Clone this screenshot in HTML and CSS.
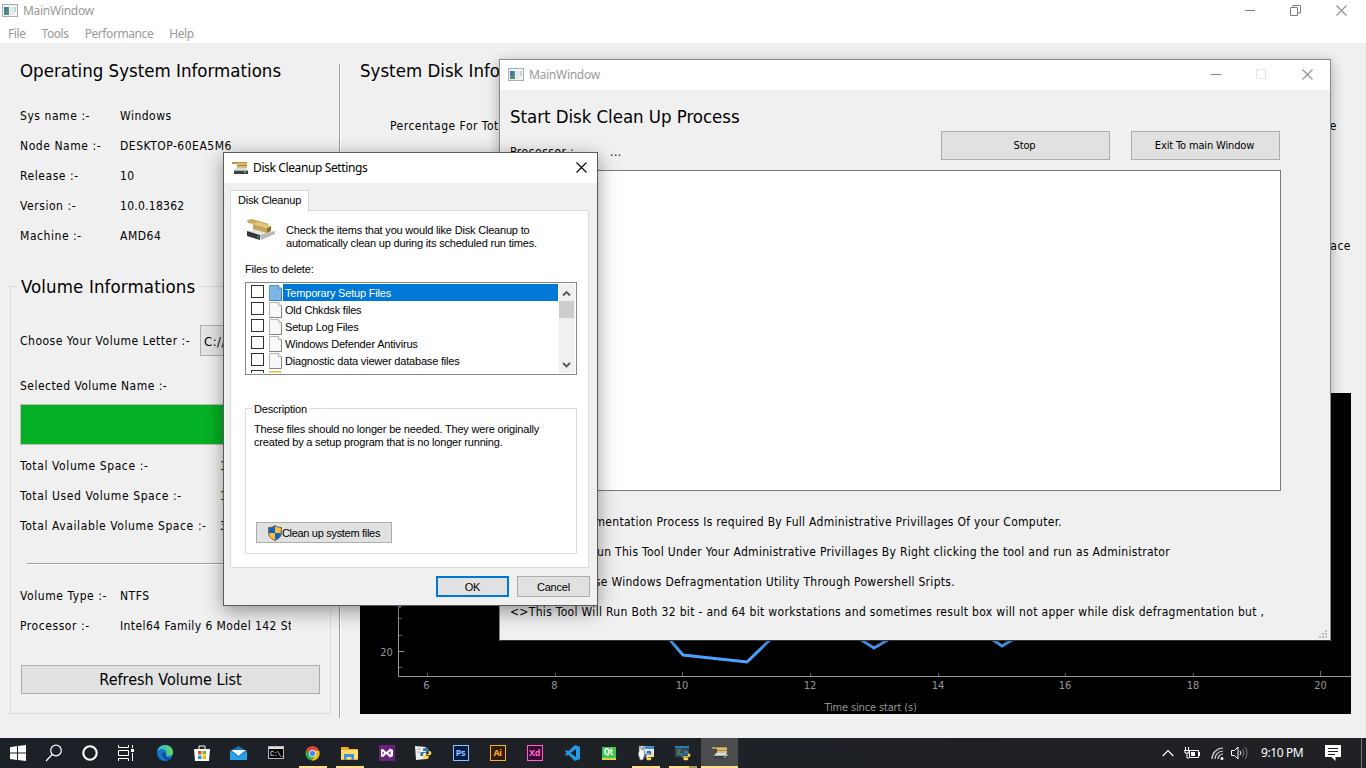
FILE: index.html
```html
<!DOCTYPE html>
<html lang="en">
<head>
<meta charset="utf-8">
<title>MainWindow</title>
<link rel="stylesheet" href="styles.css">
</head>
<body>
<svg class="defs" width="0" height="0">
  <defs>
    <symbol id="app" viewBox="0 0 16 14"><rect x=".5" y=".5" width="15" height="12" fill="#f4f4f4" stroke="#a9adb1"/><rect x="2" y="3" width="5" height="8" fill="#4c9080"/><rect x="2" y="3" width="3" height="4" fill="#3f76a8"/><rect x="8" y="3" width="3.500" height="8" fill="#e2e8e6"/><rect x="12" y="3" width="2" height="5" fill="#c4d6ce"/></symbol>
    <symbol id="disk" viewBox="0 0 16 14"><path d="M0 1h15v2H0z" fill="#b99645"/><path d="M5 2h10v5H5z" fill="#d6bb79"/><path d="M5 4h10v1H5z" fill="#a98a45"/><path d="M4 7h10l2 3H2z" fill="#d9dbdd"/><path d="M2 9h14v4H2z" fill="#3c4043"/><path d="M2 9h14v1H2z" fill="#aeb1b4"/><path d="M12 10.500h2v1.500h-2z" fill="#36e33c"/></symbol>
    <symbol id="x" viewBox="0 0 11 11"><path d="M.5.5l10 10M10.500.5l-10 10" fill="none" stroke="currentColor" stroke-width="1.1"/></symbol>
    <symbol id="page" viewBox="0 0 13 16"><path d="M.5.500h9l3 3v12H.5z" fill="#f8f8f8" stroke="#b4b4b4"/><path d="M.5 15.500h12v-12" fill="none" stroke="#858585"/><path d="M9.500.5v3h3" fill="#fff" stroke="#b4b4b4"/></symbol>
    <symbol id="page-selected" viewBox="0 0 13 16"><path d="M.5.500h9l3 3v12H.5z" fill="#7cb5e6" stroke="#5a97c9"/><path d="M.5 15.500h12v-12" fill="none" stroke="#3f7fb4"/><path d="M9.500.5v3h3" fill="#8fc2ec" stroke="#5a97c9"/></symbol>
    <symbol id="py" viewBox="0 0 16 16"><path d="M8 1C5 1 5 2 5 4v1h4v1H3C1 6 1 11 3 11h2V9c0-1 1-2 2-2h3c1 0 2-1 2-2V3c0-2-2-2-4-2z" fill="#3973a8"/><path d="M8 15c3 0 4-1 4-2v-2H8v-1h5c3 0 3-5 0-5h-1v2c0 1-1 2-2 2H7c-1 0-2 1-2 2v2c0 1 1 2 3 2z" fill="#ffd94f"/></symbol>
  </defs>
</svg>
<div class="desktop">
  <main class="main-window">
    <header class="titlebar inactive">
      <svg class="app-icon"><use href="#app"/></svg><span class="segoe">MainWindow</span>
      <div class="controls">
        <svg width="11" height="11"><path d="M1 5.500h10" stroke="#808080"/></svg>
        <svg width="11" height="11"><path d="M.5 2.500h7v8h-7zM3 2.500V.5h7.500V8H8" fill="none" stroke="#808080"/></svg>
        <svg width="11" height="11"><use href="#x"/></svg>
      </div>
    </header>
    <nav class="menubar segoe"><span>File</span><span>Tools</span><span>Performance</span><span>Help</span></nav>
    <div class="main-body">
      <section class="left">
        <h1>Operating System Informations</h1>
        <dl class="facts">
          <div><dt>Sys name :-</dt><dd>Windows</dd></div>
          <div><dt>Node Name :-</dt><dd>DESKTOP-60EA5M6</dd></div>
          <div><dt>Release :-</dt><dd>10</dd></div>
          <div><dt>Version :-</dt><dd class="build">10.0.18362</dd></div>
          <div><dt>Machine :-</dt><dd>AMD64</dd></div>
        </dl>
        <section class="volume">
          <h1 class="legend">Volume Informations</h1>
          <div class="choose"><span>Choose Your Volume Letter :-</span><span class="combo">C://</span></div>
          <div class="selected">Selected Volume Name :-</div>
          <div class="progress"></div>
          <dl class="facts wide">
            <div><dt>Total Volume Space :-</dt><dd>1</dd></div>
            <div><dt>Total Used Volume Space :-</dt><dd>1</dd></div>
            <div><dt>Total Available Volume Space :-</dt><dd>3</dd></div>
          </dl>
          <div class="rule"></div>
          <dl class="facts">
            <div><dt>Volume Type :-</dt><dd>NTFS</dd></div>
            <div><dt>Processor :-</dt><dd class="clip">Intel64 Family 6 Model 142 St</dd></div>
          </dl>
          <div class="button refresh">Refresh Volume List</div>
        </section>
      </section>
      <div class="divider"></div>
      <section class="right">
        <h1>System Disk Info</h1>
        <div class="usage"><span>Percentage For Tot</span><span>e</span></div>
        <div class="space">ace</div>
        <svg class="plot" width="991" height="321" viewBox="360 393 991 321">
          <rect x="360" y="393" width="991" height="321" fill="#000"/>
          <path d="M398.500 393v283.500H1351" fill="none" stroke="#969696"/>
          <path d="M399 651.500h5" stroke="#969696"/>
          <path d="M399 618.500h3M399 635.500h3M399 667.500h3M427.500 673v3M555.500 673v3M682.500 672v4M810.500 673v3M938.500 673v3M1065.500 673v3M1193.500 673v3M1320.500 671v5" stroke="#626262"/>
          <path d="M399 607l5-6M664 633l19 22 64 7 28-27M852 634l22 14 24-14M984 634l18 12 20-12" fill="none" stroke="#4da3ff" stroke-width="3"/>
          <g class="ticks"><text x="386.500" y="656">20</text><text x="426.500" y="689">6</text><text x="554.500" y="689">8</text><text x="682" y="689">10</text><text x="810" y="689">12</text><text x="938" y="689">14</text><text x="1065" y="689">16</text><text x="1193" y="689">18</text><text x="1320.500" y="689">20</text></g>
          <text class="axis" x="870.500" y="711">Time since start (s)</text>
        </svg>
      </section>
    </div>
  </main>

  <section class="clean-window">
    <header class="titlebar inactive">
      <svg class="app-icon"><use href="#app"/></svg><span class="segoe">MainWindow</span>
      <div class="controls">
        <svg width="11" height="11"><path d="M1 5.500h10" stroke="#808080"/></svg>
        <svg width="11" height="11"><path d="M.5.500h9v9h-9z" fill="none" stroke="#e4e4e4"/></svg>
        <svg width="11" height="11"><use href="#x"/></svg>
      </div>
    </header>
    <div class="clean-body">
      <div class="clean-head">
        <div class="clean-title"><h1>Start Disk Clean Up Process</h1><div class="cpu"><span>Processor :-</span><span>...</span></div></div>
        <div class="button stop">Stop</div>
        <div class="button exit">Exit To main Window</div>
      </div>
      <div class="output"></div>
      <ul class="notes">
        <li class="n1">mentation Process Is required By Full Administrative Privillages Of your Computer.</li>
        <li class="n2">un This Tool Under Your Administrative Privillages By Right clicking the tool and run as Administrator</li>
        <li class="n3">se Windows Defragmentation Utility Through Powershell Sripts.</li>
        <li class="n4">&lt;&gt;This Tool Will Run Both 32 bit - and 64 bit workstations and sometimes result box will not apper while disk defragmentation but ,</li>
      </ul>
      <svg class="grip" width="9" height="9"><path d="M6 0h2v2H6zM3 3h2v2H3zM6 3h2v2H6zM0 6h2v2H0zM3 6h2v2H3zM6 6h2v2H6z" fill="#bdbdbd"/></svg>
    </div>
  </section>

  <section class="dialog">
    <header class="dialog-title segoe"><svg width="16" height="14"><use href="#disk"/></svg><span>Disk Cleanup Settings</span><svg class="close" width="11" height="11"><use href="#x"/></svg></header>
    <div class="dialog-body">
      <div class="tab">Disk Cleanup</div>
      <div class="pane">
        <div class="intro">
          <svg width="30" height="22" viewBox="0 0 30 22"><path d="M1 13l9-4 19 4-15 6z" fill="#e4e5e7"/><path d="M14 16l15-4v3l-14 6z" fill="#b8babd"/><path d="M1 12l13 4v5L1 17z" fill="#34373a"/><path d="M11 17l2 1v1l-2-1z" fill="#42da46"/><path d="M1 1l5-1 17 5-4 3L8 5 2 4z" fill="#c9aa5c"/><path d="M7 5l14 4v5L7 10z" fill="#c6a251"/><path d="M21 9l4-2v5l-4 2z" fill="#8e702c"/><path d="M7 5l5-2 13 4-4 2z" fill="#e0c784"/></svg>
          <p>Check the items that you would like Disk Cleanup to<br>automatically clean up during its scheduled run times.</p>
        </div>
        <div class="files-label">Files to delete:</div>
        <div class="list">
          <ul>
            <li class="sel"><i></i><svg><use href="#page-selected"/></svg><span>Temporary Setup Files</span></li>
            <li><i></i><svg><use href="#page"/></svg><span>Old Chkdsk files</span></li>
            <li><i></i><svg><use href="#page"/></svg><span>Setup Log Files</span></li>
            <li><i></i><svg><use href="#page"/></svg><span>Windows Defender Antivirus</span></li>
            <li><i></i><svg><use href="#page"/></svg><span>Diagnostic data viewer database files</span></li>
            <li><i></i><b></b></li>
          </ul>
          <div class="scroll"><svg width="15" height="17"><path d="M4 11.500L7.500 8l3.500 3.500" fill="none" stroke="#555" stroke-width="1.800"/></svg><div class="thumb"></div><svg width="15" height="17"><path d="M4 7l3.500 3.500L11 7" fill="none" stroke="#555" stroke-width="1.800"/></svg></div>
        </div>
        <section class="description">
          <h2>Description</h2>
          <p>These files should no longer be needed. They were originally<br>created by a setup program that is no longer running.</p>
          <div class="button system"><svg width="14" height="16" viewBox="0 0 14 16"><path d="M7 .5C5 2 3 2.500.7 2.500V8c0 4 3 6 6.300 7.500C10.300 14 13.300 12 13.300 8V2.500C11 2.500 9 2 7 .5z" fill="#ffbd35"/><path d="M7 1C5 2.300 3 3 1 3v5h6zM7 8h6c0 4-3 6-6 7z" fill="#0b67c4"/><path d="M7 .5C5 2 3 2.500.7 2.500V8c0 4 3 6 6.300 7.500C10.300 14 13.300 12 13.300 8V2.500C11 2.500 9 2 7 .5z" fill="none" stroke="#55595c"/></svg><span>Clean up system files</span></div>
        </section>
      </div>
      <div class="actions"><div class="button ok">OK</div><div class="button">Cancel</div></div>
    </div>
  </section>

  <footer class="taskbar">
    <div class="shell">
      <div><svg width="16" height="16"><path d="M0 2.300L7 1v6.500H0zM8 1l8-1v7.500H8zM0 8.500h7V15L0 14zM8 8.500h8V16l-8-1z" fill="#fff"/></svg></div>
      <div><svg width="18" height="18"><circle cx="11" cy="6.500" r="5.300" fill="none" stroke="#fff" stroke-width="1.200"/><path d="M7.200 10.500L1 17" stroke="#fff" stroke-width="1.200"/></svg></div>
      <div><svg width="16" height="16"><circle cx="8" cy="8" r="6.700" fill="none" stroke="#fff" stroke-width="2.100"/></svg></div>
      <div><svg width="16" height="16"><path d="M.5 0v2.500h10V0M.5 5.500h10v5H.5zM.5 16v-2.500h10V16M14.500 0v3M14.500 8v8" fill="none" stroke="#fff"/><path d="M13 4h3v3h-3z" fill="#fff"/></svg></div>
    </div>
    <div class="pinned">
      <div><svg width="16" height="16"><defs><linearGradient id="edge" x1="0" x2="1"><stop stop-color="#26aee5"/><stop offset="1" stop-color="#62da61"/></linearGradient></defs><circle cx="8" cy="8" r="8" fill="#1476c9"/><path d="M0 7C1 2 4 0 8 0c5 0 8 3.500 8 7 0 3-2 4-5 4-2 0-2-1-1.500-2C10 7 8 4 5 4 3 4 1 5 0 7z" fill="url(#edge)"/><path d="M6 7c-2 4 1 8 6 8 1 0 2-1 3-2-5 1-7-1-6-4z" fill="#0d4d94"/></svg></div>
      <div><svg width="16" height="16"><path d="M5 5V1h6v4" fill="none" stroke="#fff"/><path d="M0 4h16l-1 12H1z" fill="#fff"/><path d="M4 6h3.500v3.500H4z" fill="#e84d23"/><path d="M8.500 6H12v3.500H8.500z" fill="#7db700"/><path d="M4 10.500h3.500V14H4z" fill="#149ed9"/><path d="M8.500 10.500H12V14H8.500z" fill="#f8b400"/></svg></div>
      <div><svg width="17" height="16"><path d="M0 6l8.500-5L17 6v9H0z" fill="#1673b5"/><path d="M1 5h15l-7.500 6z" fill="#f1f7fb"/><path d="M0 6l8.500 6L17 6v9H0z" fill="#27a5eb"/></svg></div>
      <div><svg width="16" height="14"><rect x=".5" y=".5" width="15" height="12" fill="#000" stroke="#b8b8b8"/><path d="M1 2h14" stroke="#ddd" stroke-width="2"/><text class="cmd" x="2" y="10">C:\_</text></svg></div>
      <div class="open"><svg width="15" height="15" viewBox="0 0 16 16"><circle cx="8" cy="8" r="7.500" fill="#34a853"/><path d="M1.500 4A7.500 7.500 0 0 1 15 5H8L5 9z" fill="#ea4335"/><path d="M8 5h7c2 5-2 11-8 10.500L11 10z" fill="#fbbc05"/><circle cx="8" cy="8" r="3.700" fill="#fff"/><circle cx="8" cy="8" r="2.900" fill="#4285f4"/></svg></div>
      <div class="open"><svg width="17" height="15"><path d="M0 1h7l1.500 2H17v11H0z" fill="#f2ae22"/><path d="M0 4h17v9H0z" fill="#ffdc72"/><path d="M3 14V8h10v6h-2.500v-3h-5v3z" fill="#3b91dc"/></svg></div>
      <div><svg width="16" height="16"><path d="M0 0h16v16H0z" fill="#68217a"/><path d="M2 4.500L4 4l3.500 3L11 3.500 14 5v6l-3 1.500L7.500 9 4 12l-2-.5z" fill="#fff"/><path d="M3.500 6.500v3L5.300 8zM11.500 6v4L9.300 8z" fill="#68217a"/></svg></div>
      <div><svg width="17" height="16"><path d="M0 1l11 1v12L1 15z" fill="#eee"/><path d="M2 4h4M2 7h3" stroke="#aaa"/><use href="#py" x="4" y="2" width="13" height="13"/></svg></div>
      <div><span class="adobe ps">Ps</span></div>
      <div><span class="adobe ai">Ai</span></div>
      <div><span class="adobe xd">Xd</span></div>
      <div><svg width="16" height="16"><path d="M11 0l5 2v12l-5 2L1 6.500 2.500 5 12 12V4L2.500 11 1 9.500z" fill="#249be2"/></svg></div>
      <div><span class="qt">Qt</span></div>
      <div class="open"><svg width="16" height="16"><path d="M2 1h14v11H2z" fill="#e8eef3"/><path d="M7 1h9v3H7z" fill="#3f91d7"/><path d="M1 0l3 5 2-5v6l1 3-2 6H2L0 9l1-3z" fill="#f5f5f5" stroke="#4e5357" stroke-width=".7"/><use href="#py" x="5" y="5" width="11" height="11"/></svg></div>
      <div class="open multi"><svg width="16" height="16"><path d="M0 1h14v11H0z" fill="#394651"/><path d="M0 1h14v2H0z" fill="#297cb8"/><path d="M2 5h4M2 7h3M2 9h5" stroke="#55a669"/><use href="#py" x="5" y="5" width="11" height="11"/></svg></div>
      <div class="active"><svg width="16" height="14"><use href="#disk"/></svg></div>
    </div>
    <div class="tray">
      <svg width="12" height="8"><path d="M.7 7L6 1.500 11.300 7" fill="none" stroke="#fff" stroke-width="1.200"/></svg>
      <svg width="16" height="13"><path d="M5.500 3.500h9v7h-9z" fill="none" stroke="#fff"/><path d="M7 5h4v4H7zM15 5h1v4h-1z" fill="#fff"/><path d="M1.500 0v3M4.500 0v3M0 3.500h6M1 4v2h4V4M3 6v5h2" fill="none" stroke="#fff"/></svg>
      <svg width="13" height="13"><path d="M1 12A11 11 0 0 1 12 1M4 12a8 8 0 0 1 8-8M7 12a5 5 0 0 1 5-5" fill="none" stroke="#d4d4d4" stroke-width="1.200"/><circle cx="11" cy="11.500" r="1.500" fill="#fff"/></svg>
      <svg width="17" height="14"><path d="M.5 4.500h3L7 1v12L3.500 9.500h-3z" fill="none" stroke="#fff"/><path d="M9 5q2 2 0 4" fill="none" stroke="#fff"/><path d="M11.500 3q3 4 0 8M14 1q4 6 0 12" fill="none" stroke="#777"/></svg>
      <span class="clock segoe">9:10 PM</span>
      <svg width="16" height="16"><path d="M0 0h16v12h-5.500v4l-4-4H0z" fill="#fff"/><path d="M3 3.500h10M3 6.500h10M3 9.500h7" stroke="#202124"/></svg>
      <span class="peek"></span>
    </div>
  </footer>
</div>
</body>
</html>
```
FILE: styles.css
```css
* { box-sizing: border-box; }
body, h1, h2, p, dl, dd, ul { margin: 0; padding: 0; }
ul { list-style: none; }
svg { display: block; flex: none; }
.defs { position: absolute; }
.desktop { position: relative; width: 1366px; height: 768px; overflow: hidden; background: #f0f0f0; color: #000; font: 12px/32px "DejaVu Sans Condensed", "DejaVu Sans", sans-serif; font-stretch: condensed; letter-spacing: .5px; white-space: nowrap; }
.segoe { font-family: "Noto Sans", "Open Sans", sans-serif; font-stretch: normal; font-size: 12px; letter-spacing: -.28px; }
h1 { height: 30px; font-size: 18.500px; font-weight: 400; line-height: 32px; letter-spacing: .01px; }
.button { display: flex; align-items: center; justify-content: center; background: #e1e1e1; border: 1px solid #adadad; }

.main-window { height: 738px; display: flex; flex-direction: column; }
.titlebar { display: flex; align-items: center; background: #fff; flex: none; }
.inactive { color: #999; }
.main-window .titlebar { height: 23px; padding: 0 19px 2px 2px; }
.titlebar .segoe { padding-top: 1px; }
.app-icon { width: 16px; height: 14px; margin-right: 5px; }
.controls { margin-left: auto; display: flex; gap: 35px; color: #909090; }
.menubar { height: 20px; background: #fff; color: #999; display: flex; gap: 16px; padding-left: 8px; line-height: 21px; letter-spacing: -.42px; flex: none; }
.main-body { flex: 1; display: flex; min-height: 0; }
.left { width: 339px; padding: 12px 8px 0 10px; }
.left > h1 { margin: 0 0 15px 10px; }
.left > .facts { padding-left: 10px; }
.facts > div { display: flex; height: 30px; }
.facts dt { width: 100px; flex: none; letter-spacing: .56px; }
.wide dt { width: 200px; letter-spacing: .6px; }
.build { letter-spacing: .26px; }
.volume { width: 321px; height: 428px; margin-top: 36px; border: 1px solid #dcdcdc; padding: 0 10px 0 9px; }
.legend { width: max-content; margin: -16px 0 0 -3px; padding: 0 3px 0 4px; background: #f0f0f0; letter-spacing: .12px; }
.choose { display: flex; height: 31px; margin-top: 24px; }
.choose > span:first-child { width: 180px; }
.combo { flex: 1; border: 1px solid #adadad; background: #e5e5e5; padding-left: 3px; font-size: 13px; }
.selected { margin-top: 14px; height: 30px; letter-spacing: .46px; }
.progress { margin-top: 4px; height: 41px; width: 300px; border: 1px solid #bcbcbc; background: #06b025; }
.wide { margin-top: 5px; }
.rule { margin: 23px 0 15px 7px; height: 2px; background: #a0a0a0; border-bottom: 1px solid #fff; }
.clip { width: 171px; overflow: hidden; letter-spacing: .42px; }
.refresh { width: 299px; height: 29px; margin: 25px 0 0 1px; font-size: 16px; letter-spacing: .02px; }
.divider { width: 2px; height: 654px; margin-top: 21px; background: #a0a0a0; border-right: 1px solid #fff; }
.right { width: 1010px; padding: 12px 0 0 19px; }
.usage { margin-top: 25px; height: 30px; display: flex; justify-content: space-between; padding: 0 14px 0 30px; }
.space { height: 30px; margin-top: 90px; text-align: right; }
.plot { margin-top: 133px; }
.ticks, .axis { fill: #969696; text-anchor: middle; font-size: 11px; letter-spacing: 0; }
.axis { letter-spacing: -.15px; }

.clean-window { position: absolute; left: 499px; top: 59px; width: 832px; height: 582px; border: 1px solid #8a8a8a; border-bottom-color: #333; background: #f0f0f0; box-shadow: 0 3px 12px rgba(0,0,0,.32); }
.clean-window .titlebar { height: 30px; padding: 0 17px 1px 8px; }
.clean-body { height: 550px; padding: 11px 49px 0 10px; display: flex; flex-direction: column; }
.clean-head { display: flex; height: 69px; padding-right: 1px; }
.clean-title { flex: 1; }
.clean-title h1 { letter-spacing: -.04px; }
.cpu { display: flex; margin-top: 5px; }
.cpu span:first-child { width: 100px; }
.stop, .exit { height: 29px; margin-top: 30px; padding-right: 2px; font-size: 11px; letter-spacing: -.15px; }
.stop { width: 169px; margin-right: 21px; }
.exit { width: 149px; }
.output { height: 321px; border: 1px solid #7a7a7a; background: #fff; flex: none; }
.notes { margin-top: 15px; letter-spacing: .3px; }
.notes li { height: 30px; display: flex; justify-content: flex-end; }
.n1 { width: 552px; } .n2 { width: 660px; } .n3 { width: 445px; } .notes .n4 { justify-content: flex-start; letter-spacing: .32px; }
.grip { margin: 4px -43px 0 auto; position: relative; left: 4px; }

.dialog { position: absolute; left: 223px; top: 152px; width: 375px; height: 454px; border: 1px solid #5a5a5a; background: #f0f0f0; box-shadow: 0 5px 18px rgba(0,0,0,.4); font: 11px/13px "Liberation Sans", Arial, sans-serif; letter-spacing: -.19px; }
.dialog-title { height: 30px; background: #fff; display: flex; align-items: center; gap: 5px; padding: 0 10px 0 8px; line-height: 30px; letter-spacing: -.38px; }
.close { margin: 0 0 1px auto; }
.dialog-body { padding: 7px 7px 0 6px; }
.tab { position: relative; z-index: 1; width: 79px; height: 21px; border: 1px solid #d9d9d9; border-bottom: 0; background: #fff; text-align: center; line-height: 19px; }
.pane { width: 359px; height: 358px; margin-top: -1px; background: #fff; border: 1px solid #dcdcdc; padding: 8px 11px 0 14px; }
.intro { display: flex; gap: 10px; padding-left: 1px; height: 44px; }
.intro p { padding-top: 5px; }
.files-label { height: 19px; }
.list { width: 332px; height: 93px; border: 1px solid #828790; display: flex; padding: 1px 1px 1px 5px; overflow: hidden; }
.list ul { flex: 1; height: 89px; overflow: hidden; }
.list li { display: flex; height: 17px; align-items: center; }
.list i { width: 13px; height: 13px; margin: -3px 5px 0 0; border: 1px solid #333; }
.list li svg { width: 13px; height: 16px; }
.list li span { flex: 1; margin-left: 1px; padding: 1px 0 0 2px; line-height: 16px; }
.list b { width: 12px; height: 14px; background: #ffe48a; border: 1px solid #e8be3c; }
.sel span { background: #0078d7; color: #fff; }
.scroll { width: 16px; margin-left: 1px; background: #f0f0f0; display: flex; flex-direction: column; }
.scroll svg:last-child { margin-top: auto; }
.thumb { height: 17px; width: 15px; background: #cdcdcd; }
.description { width: 332px; height: 146px; margin-top: 33px; border: 1px solid #dcdcdc; padding: 0 8px; }
.description h2 { width: max-content; margin: -6px 0 7px -2px; padding: 0 3px 0 2px; background: #fff; font-size: 11px; font-weight: 400; }
.system { width: 136px; height: 21px; margin: 73px 0 0 2px; letter-spacing: -.3px; }
.system span { padding-top: 2px; }
.actions { display: flex; justify-content: flex-end; gap: 8px; margin-top: 8px; }
.actions .button { width: 73px; height: 21px; padding-top: 1px; }
.actions .ok { border: 2px solid #0078d7; }

.taskbar { height: 30px; background: linear-gradient(90deg, #1c2127, #202124); color: #fff; display: flex; }
.shell, .pinned, .tray { display: flex; align-items: stretch; }
.shell div { width: 36px; display: flex; align-items: center; justify-content: center; }
.pinned { margin-left: 2px; }
.pinned div { width: 37px; display: flex; align-items: center; justify-content: center; }
.open, .active { background: linear-gradient(#ffdf8e, #ffdf8e) center bottom / 28px 2px no-repeat; }
.multi { background-image: linear-gradient(90deg, #ffdf8e 20px, #ac9a68 20px); }
.active { background-color: #4b4c4d; background-size: 100% 2px; }
.cmd { fill: #fff; font: 7px "Liberation Mono", monospace; letter-spacing: -.8px; }
.adobe { width: 16px; height: 16px; border: 1px solid; font: bold 9px/13px "Noto Sans", sans-serif; letter-spacing: -.4px; text-align: center; }
.ps { color: #8bc5ff; background: #071c4d; }
.ai { color: #ffad32; background: #321d08; }
.xd { color: #ff60cf; background: #3b0830; }
.qt { width: 14px; height: 13px; background: #3fc64f; border-bottom: 2px solid #e1d246; font: bold 8px/11px "DejaVu Sans Condensed", sans-serif; letter-spacing: 0; text-align: center; }
.tray { margin-left: auto; align-items: center; width: 204px; }
.tray svg:nth-child(2) { margin-left: 10px; }
.tray svg:nth-child(3) { margin-left: 11px; }
.tray svg:nth-child(4) { margin-left: 7px; }
.clock { width: 44px; margin: 0 20px 0 13px; letter-spacing: -.4px; }
.peek { width: 1px; height: 30px; margin-left: 20px; background: #71777b; }
```
